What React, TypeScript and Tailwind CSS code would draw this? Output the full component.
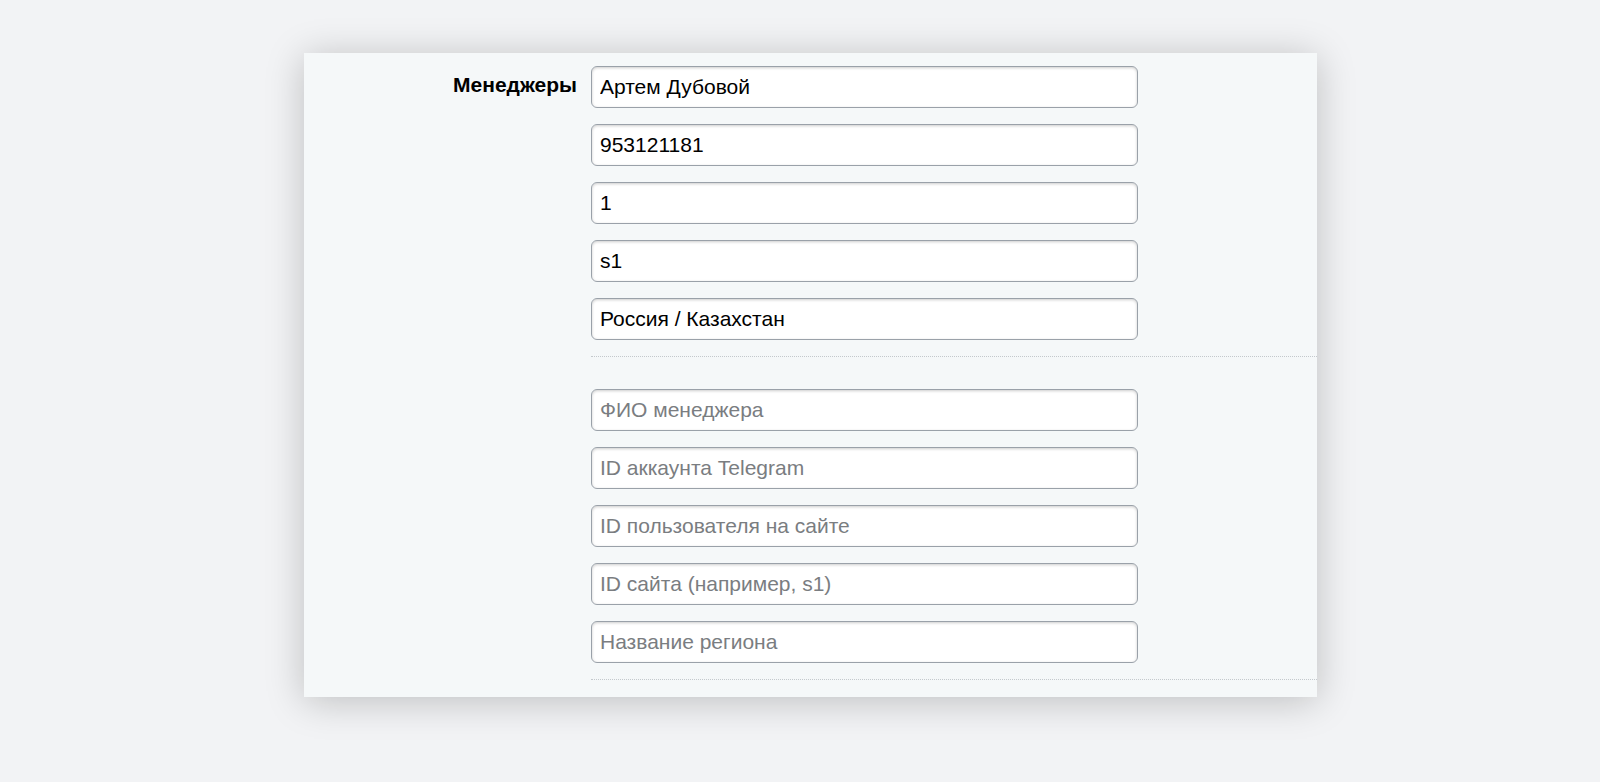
const filled = ["Артем Дубовой", "953121181", "1", "s1", "Россия / Казахстан"]
const placeholders = [
  "ФИО менеджера",
  "ID аккаунта Telegram",
  "ID пользователя на сайте",
  "ID сайта (например, s1)",
  "Название региона",
]

function Field({ value, placeholder }: { value?: string; placeholder?: string }) {
  return (
    <input
      type="text"
      defaultValue={value}
      placeholder={placeholder}
      className="block h-[42px] w-[547px] rounded-[6px] border border-[#9aa1a9] bg-white px-[8px] text-[21px] text-black shadow-[inset_0_1px_3px_rgba(0,0,0,0.2)] outline-none placeholder:text-[#7a7d81]"
    />
  )
}

function Group({ items, label }: { items: { value?: string; placeholder?: string }[]; label?: string }) {
  return (
    <div className="grid grid-cols-[273px_1fr] gap-x-[14px]">
      <div className="pt-[6px] text-right text-[21px] font-bold leading-[26px] text-black">{label}</div>
      <div className="border-b border-dotted border-[#c4c9cd] pb-[16px]">
        <div className="flex flex-col gap-[16px]">
          {items.map((it, i) => (
            <Field key={i} value={it.value} placeholder={it.placeholder} />
          ))}
        </div>
      </div>
    </div>
  )
}

export default function App() {
  return (
    <div
      className="min-h-screen bg-[#f2f3f5] pl-[304px] pt-[53px]"
      style={{ fontFamily: '"Liberation Sans", Arial, sans-serif' }}
    >
      <div className="flex w-[1013px] flex-col gap-[32px] bg-[#f5f8f9] pb-[17px] pt-[13px] shadow-[0_4px_36px_rgba(0,0,0,0.22)]">
        <Group label="Менеджеры" items={filled.map((v) => ({ value: v }))} />
        <Group items={placeholders.map((p) => ({ placeholder: p }))} />
      </div>
    </div>
  )
}
